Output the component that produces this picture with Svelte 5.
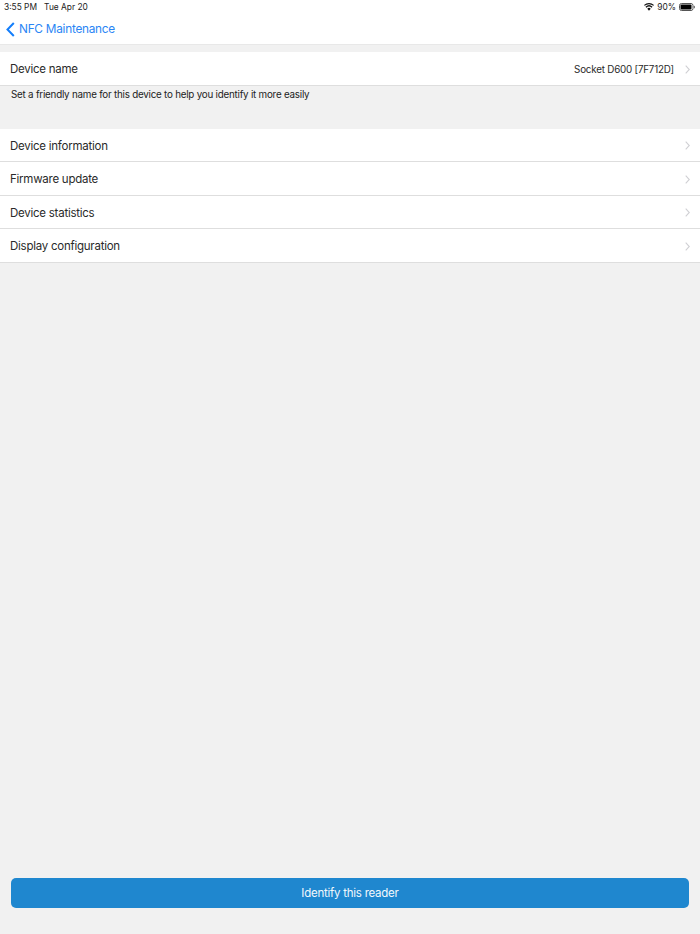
<script>
	const rows = ['Device information', 'Firmware update', 'Device statistics', 'Display configuration'];
</script>

<div class="page">
	<header>
		<div class="status">
			<span class="time">3:55 PM&nbsp;&nbsp; Tue Apr 20</span>
			<div class="sys">
				<svg width="10" height="8" viewBox="0 0 11 8"><path d="M5.5 8 3.6 5.8a2.8 2.8 0 0 1 3.8 0zM2.7 4.8 1.6 3.6a5.8 5.8 0 0 1 7.8 0L8.3 4.8a4.2 4.2 0 0 0-5.6 0zM.8 2.7 0 1.8a8.2 8.2 0 0 1 11 0l-.8.9a7 7 0 0 0-9.4 0z" fill="#111" /></svg>
				<span>90%</span>
				<svg width="16" height="8" viewBox="0 0 16 8"><rect x=".5" y=".5" width="13.5" height="7" rx="2" fill="none" stroke="#555" /><rect x="1.5" y="1.5" width="11" height="5" rx="1" fill="#000" /><rect x="14.8" y="2.7" width="1.2" height="2.6" rx=".6" fill="#777" /></svg>
			</div>
		</div>
		<div class="nav">
			<svg width="9" height="15" viewBox="0 0 9 15"><path d="M7.8 1 1.5 7.5l6.3 6.5" fill="none" stroke="#147efb" stroke-width="2" /></svg>
			<span>NFC Maintenance</span>
		</div>
	</header>

	<div class="row name">
		<span>Device name</span>
		<span class="value">Socket D600 [7F712D]</span>
		<svg class="chev" width="5" height="9" viewBox="0 0 5 9"><path d="m.7.7 3.6 3.8-3.6 3.8" fill="none" stroke="#d0d0d4" stroke-width="1.1" /></svg>
	</div>
	<p class="hint">Set a friendly name for this device to help you identify it more easily</p>

	<div class="list">
		{#each rows as row}
			<div class="row">
				<span>{row}</span>
				<svg class="chev" width="5" height="9" viewBox="0 0 5 9"><path d="m.7.7 3.6 3.8-3.6 3.8" fill="none" stroke="#d0d0d4" stroke-width="1.1" /></svg>
			</div>
		{/each}
	</div>

	<div class="footer">
		<button>Identify this reader</button>
	</div>
</div>

<style>
	:global(body) {
		margin: 0;
		background: #f1f1f1;
	}

	.page {
		height: 934px;
		display: flex;
		flex-direction: column;
		background: #f1f1f1;
		font-family: Inter, "Liberation Sans", sans-serif;
		color: #2a2a2a;
		overflow: hidden;
	}

	header {
		height: 44px;
		background: #fff;
		border-bottom: 1px solid #e8e8e8;
		box-sizing: content-box;
	}

	.status {
		height: 14px;
		padding: 0 5px 0 4px;
		display: flex;
		justify-content: space-between;
		align-items: center;
		font-size: 8.4px;
		color: #222;
	}

	.sys {
		display: flex;
		align-items: center;
		gap: 3px;
	}

	.nav {
		height: 30px;
		padding-left: 6px;
		display: flex;
		align-items: center;
		gap: 4px;
		color: #2a85f5;
		font-size: 11.8px;
		letter-spacing: -0.25px;
	}

	.row {
		height: 33.5px;
		box-sizing: border-box;
		background: #fff;
		border-bottom: 1px solid #dedede;
		display: flex;
		align-items: center;
		padding: 1.6px 10px 0;
		font-size: 11.5px;
		letter-spacing: -0.25px;
	}

	.row span:first-child {
		flex: 1;
	}

	.name {
		margin-top: 7px;
	}

	.value {
		font-size: 9.8px;
		letter-spacing: -0.2px;
		margin-right: 11px;
	}

	.hint {
		margin: 0;
		padding: 3px 11px 0;
		height: 39px;
		font-size: 9.8px;
		letter-spacing: -0.22px;
		color: #222;
	}

	.list {
		margin-top: 1px;
	}

	.footer {
		margin-top: auto;
		padding: 0 11px 26px;
	}

	button {
		display: block;
		width: 100%;
		height: 30px;
		border: none;
		border-radius: 5px;
		background: #1f87cf;
		color: #f2f8fc;
		font: inherit;
		font-size: 11.5px;
		letter-spacing: -0.25px;
	}
</style>
